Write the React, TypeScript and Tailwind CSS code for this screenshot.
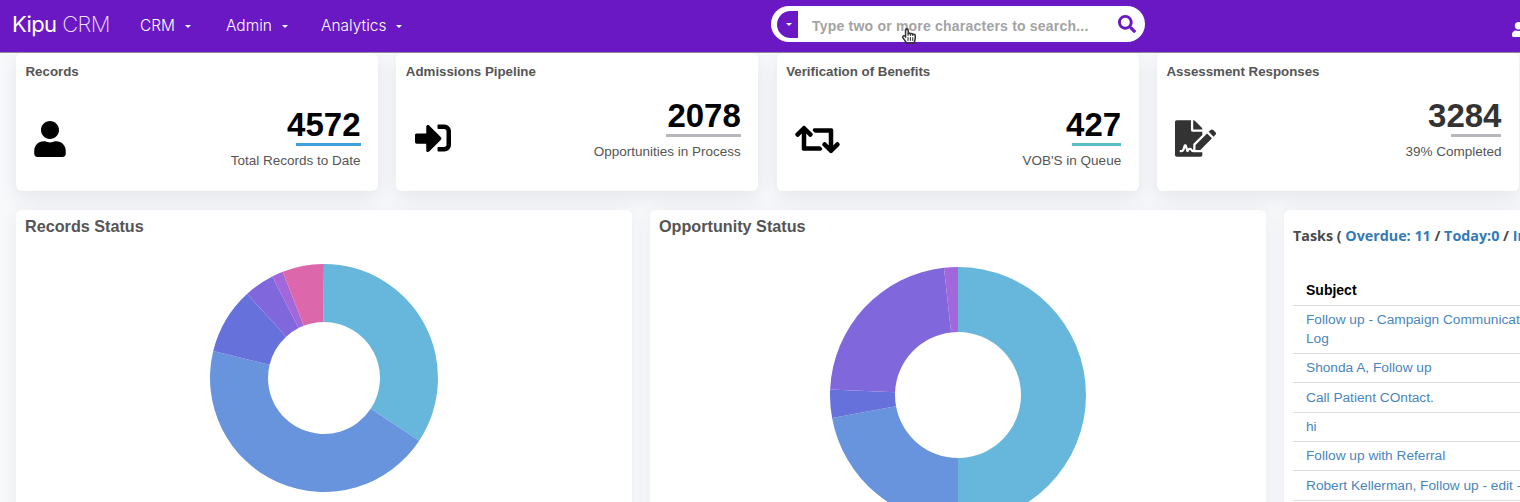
import React from "react";
import { FaUser, FaSignInAlt, FaRetweet, FaFileSignature, FaSearch, FaRegHandPointer } from "react-icons/fa";

type Seg = { end: number; color: string };

function arc(cx: number, cy: number, R: number, r: number, a0: number, a1: number) {
  const p = (rad: number, a: number) => {
    const t = (a * Math.PI) / 180;
    return `${(cx + rad * Math.sin(t)).toFixed(2)} ${(cy - rad * Math.cos(t)).toFixed(2)}`;
  };
  const large = a1 - a0 > 180 ? 1 : 0;
  return `M${p(R, a0)}A${R} ${R} 0 ${large} 1 ${p(R, a1)}L${p(r, a1)}A${r} ${r} 0 ${large} 0 ${p(r, a0)}Z`;
}

function Donut({ R, r, segs, className }: { R: number; r: number; segs: Seg[]; className: string }) {
  const size = R * 2;
  let start = 0;
  return (
    <svg width={size} height={size} viewBox={`0 0 ${size} ${size}`} className={className}>
      {segs.map((s, i) => {
        const d = arc(R, R, R, r, start, s.end);
        start = s.end;
        return <path key={i} d={d} fill={s.color} />;
      })}
    </svg>
  );
}

function Caret({ className = "" }: { className?: string }) {
  return <span className={`inline-block w-0 h-0 border-x-[3px] border-x-transparent border-t-[3px] border-t-white ${className}`} />;
}

function Card({
  title, icon, value, label, lineW, lineColor, high, valueColor,
}: {
  title: string; icon: React.ReactNode; value: string; label: string; lineW: string; lineColor: string; high?: boolean; valueColor: string;
}) {
  return (
    <div className="w-[362px] shrink-0 h-[138px] bg-white rounded-md shadow-[0_6px_18px_rgba(40,50,90,0.1)] pl-[9.5px] pr-[10px] relative">
      <div className="pt-[11px] text-[13.3px] leading-[15px] font-bold text-[#555]">{title}</div>
      <div className={`flex items-center justify-between pr-[7.5px] ${high ? "mt-[19px]" : "mt-[28px]"}`}>
        <div className={`w-[60px] flex justify-start pl-[9px] ${high ? "mt-[18px]" : "mt-[2px]"}`}>{icon}</div>
        <div className="flex flex-col items-end">
          <div className={`text-[33px] leading-[36px] font-bold ${valueColor}`}>{value}</div>
          <div className={`h-[3px] ${lineW} ${lineColor}`} />
          <div className="mt-[6px] text-[13.5px] leading-[17px] text-[#555]">{label}</div>
        </div>
      </div>
    </div>
  );
}

const rows = [
  { t: "Shonda A, Follow up", h: "h-[29px]" },
  { t: "Call Patient COntact.", h: "h-[30px]" },
  { t: "hi", h: "h-[29px]" },
  { t: "Follow up with Referral", h: "h-[29px]" },
  { t: "Robert Kellerman, Follow up - edit - Sept", h: "h-[30px]" },
];

export default function App() {
  return (
    <div className="w-[1520px] h-[502px] overflow-hidden bg-[#f8f9fb] font-['Liberation_Sans',Arial,sans-serif]">
      <header className="relative z-10 h-[53px] bg-[#6a18c4] border-b border-b-[#8f8a98] flex items-center text-white">
        <div className="ml-[12px] w-[128px] text-[22px] leading-[22px] -mt-[5px] font-['Inter',sans-serif] tracking-[-0.6px]">
          <span className="font-normal">Kipu</span> <span className="font-extralight text-[#ece0fa]">CRM</span>
        </div>
        <nav className="flex items-center text-[15.5px] font-['Inter',sans-serif] font-light">
          <span className="flex items-center w-[86px]">CRM<Caret className="ml-[10px]" /></span>
          <span className="flex items-center w-[95px]">Admin<Caret className="ml-[10px]" /></span>
          <span className="flex items-center w-[96px]">Analytics<Caret className="ml-[10px]" /></span>
        </nav>
        <div className="ml-[354px] -mt-[4px] w-[374px] h-[36px] rounded-full bg-white flex items-center relative pl-[6px]">
          <div className="w-[21px] h-[27px] bg-[#6a18c4] rounded-l-full rounded-r-[3px] flex items-center justify-center"><Caret className="ml-[2px]" /></div>
          <span className="ml-[14px] mt-[4px] text-[14px] font-bold text-[#a3a3a3] tracking-[0.015em] whitespace-nowrap">Type two or more characters to search...</span>
          <FaSearch className="absolute right-[9px] top-[9px] text-[#6a18c4]" size={18} />
          <FaRegHandPointer className="absolute left-[130px] top-[22px] text-[#333]" size={16} />
        </div>
        <FaUser className="absolute left-[1511px] top-[22px]" size={15} />
      </header>

      <main className="pl-[16px]">
        <div className="flex gap-[18.33px]">
          <Card title="Records" icon={<FaUser size={36} className="text-black -ml-[3px] -mt-[1px]" />} value="4572" label="Total Records to Date" lineW="w-[65px]" lineColor="bg-[#3f9fdc]" valueColor="text-black" />
          <Card title="Admissions Pipeline" icon={<FaSignInAlt size={36} className="text-black" />} value="2078" label="Opportunities in Process" lineW="w-[75px]" lineColor="bg-[#b8b8bc]" high valueColor="text-black" />
          <Card title="Verification of Benefits" icon={<FaRetweet size={45} className="text-black" />} value="427" label="VOB'S in Queue" lineW="w-[49px]" lineColor="bg-[#5cbcc8]" valueColor="text-black" />
          <Card title="Assessment Responses" icon={<FaFileSignature size={41} className="text-[#333]" />} value="3284" label="39% Completed" lineW="w-[50px]" lineColor="bg-[#b8b8bc]" high valueColor="text-[#333]" />
        </div>

        <div className="flex gap-[18px] mt-[19px]">
          <section className="w-[616px] h-[320px] shrink-0 bg-white rounded-md shadow-[0_2px_18px_rgba(40,50,90,0.07)] px-[9px] pt-[7px]">
            <h2 className="text-[16.2px] leading-[18px] font-bold text-[#555]">Records Status</h2>
            <Donut
              R={114} r={56} className="ml-[185px] mt-[29px]"
              segs={[
                { end: 123.4, color: "#67b7dc" },
                { end: 283.7, color: "#6794dc" },
                { end: 317.5, color: "#6771dc" },
                { end: 333, color: "#8067dc" },
                { end: 338.8, color: "#a367dc" },
                { end: 359.5, color: "#dc67ab" },
                { end: 360, color: "#999" },
              ]}
            />
          </section>
          <section className="w-[616px] h-[320px] shrink-0 bg-white rounded-md shadow-[0_2px_18px_rgba(40,50,90,0.07)] px-[9px] pt-[7px]">
            <h2 className="text-[16.2px] leading-[18px] font-bold text-[#555]">Opportunity Status</h2>
            <Donut
              R={128} r={63} className="ml-[171px] mt-[32px]"
              segs={[
                { end: 180, color: "#67b7dc" },
                { end: 259.6, color: "#6794dc" },
                { end: 272.5, color: "#6771dc" },
                { end: 353.7, color: "#8067dc" },
                { end: 360, color: "#a367dc" },
              ]}
            />
          </section>
          <section className="w-[616px] h-[320px] shrink-0 bg-white rounded-md shadow-[0_2px_18px_rgba(40,50,90,0.07)] pl-[9px] pt-[17px]">
            <div className="text-[14.3px] leading-[18px] font-bold text-[#4a4a4a] font-['Open_Sans',sans-serif] whitespace-nowrap">
              Tasks ( <span className="text-[#337ab7]">Overdue: 11</span> / <span className="text-[#337ab7]">Today:0</span> / <span className="text-[#337ab7]">In Progress: 4</span>
            </div>
            <div className="mt-[30px] text-[13.7px]">
              <div className="h-[31px] pl-[13px] flex items-center text-[14px] font-bold text-black border-b border-b-[#ddd]">Subject</div>
              <div className="h-[48px] pl-[13px] flex items-center leading-[19px] text-[#4a86bd] border-b border-b-[#ddd] whitespace-nowrap">
                <span className="-mt-[1px]">Follow up - Campaign Communication<br />Log</span>
              </div>
              {rows.map((r) => (
                <div key={r.t} className={`${r.h} pl-[13px] pt-[1px] flex items-center text-[#4a86bd] border-b border-b-[#ddd] whitespace-nowrap`}>{r.t}</div>
              ))}
            </div>
          </section>
        </div>
      </main>
    </div>
  );
}
